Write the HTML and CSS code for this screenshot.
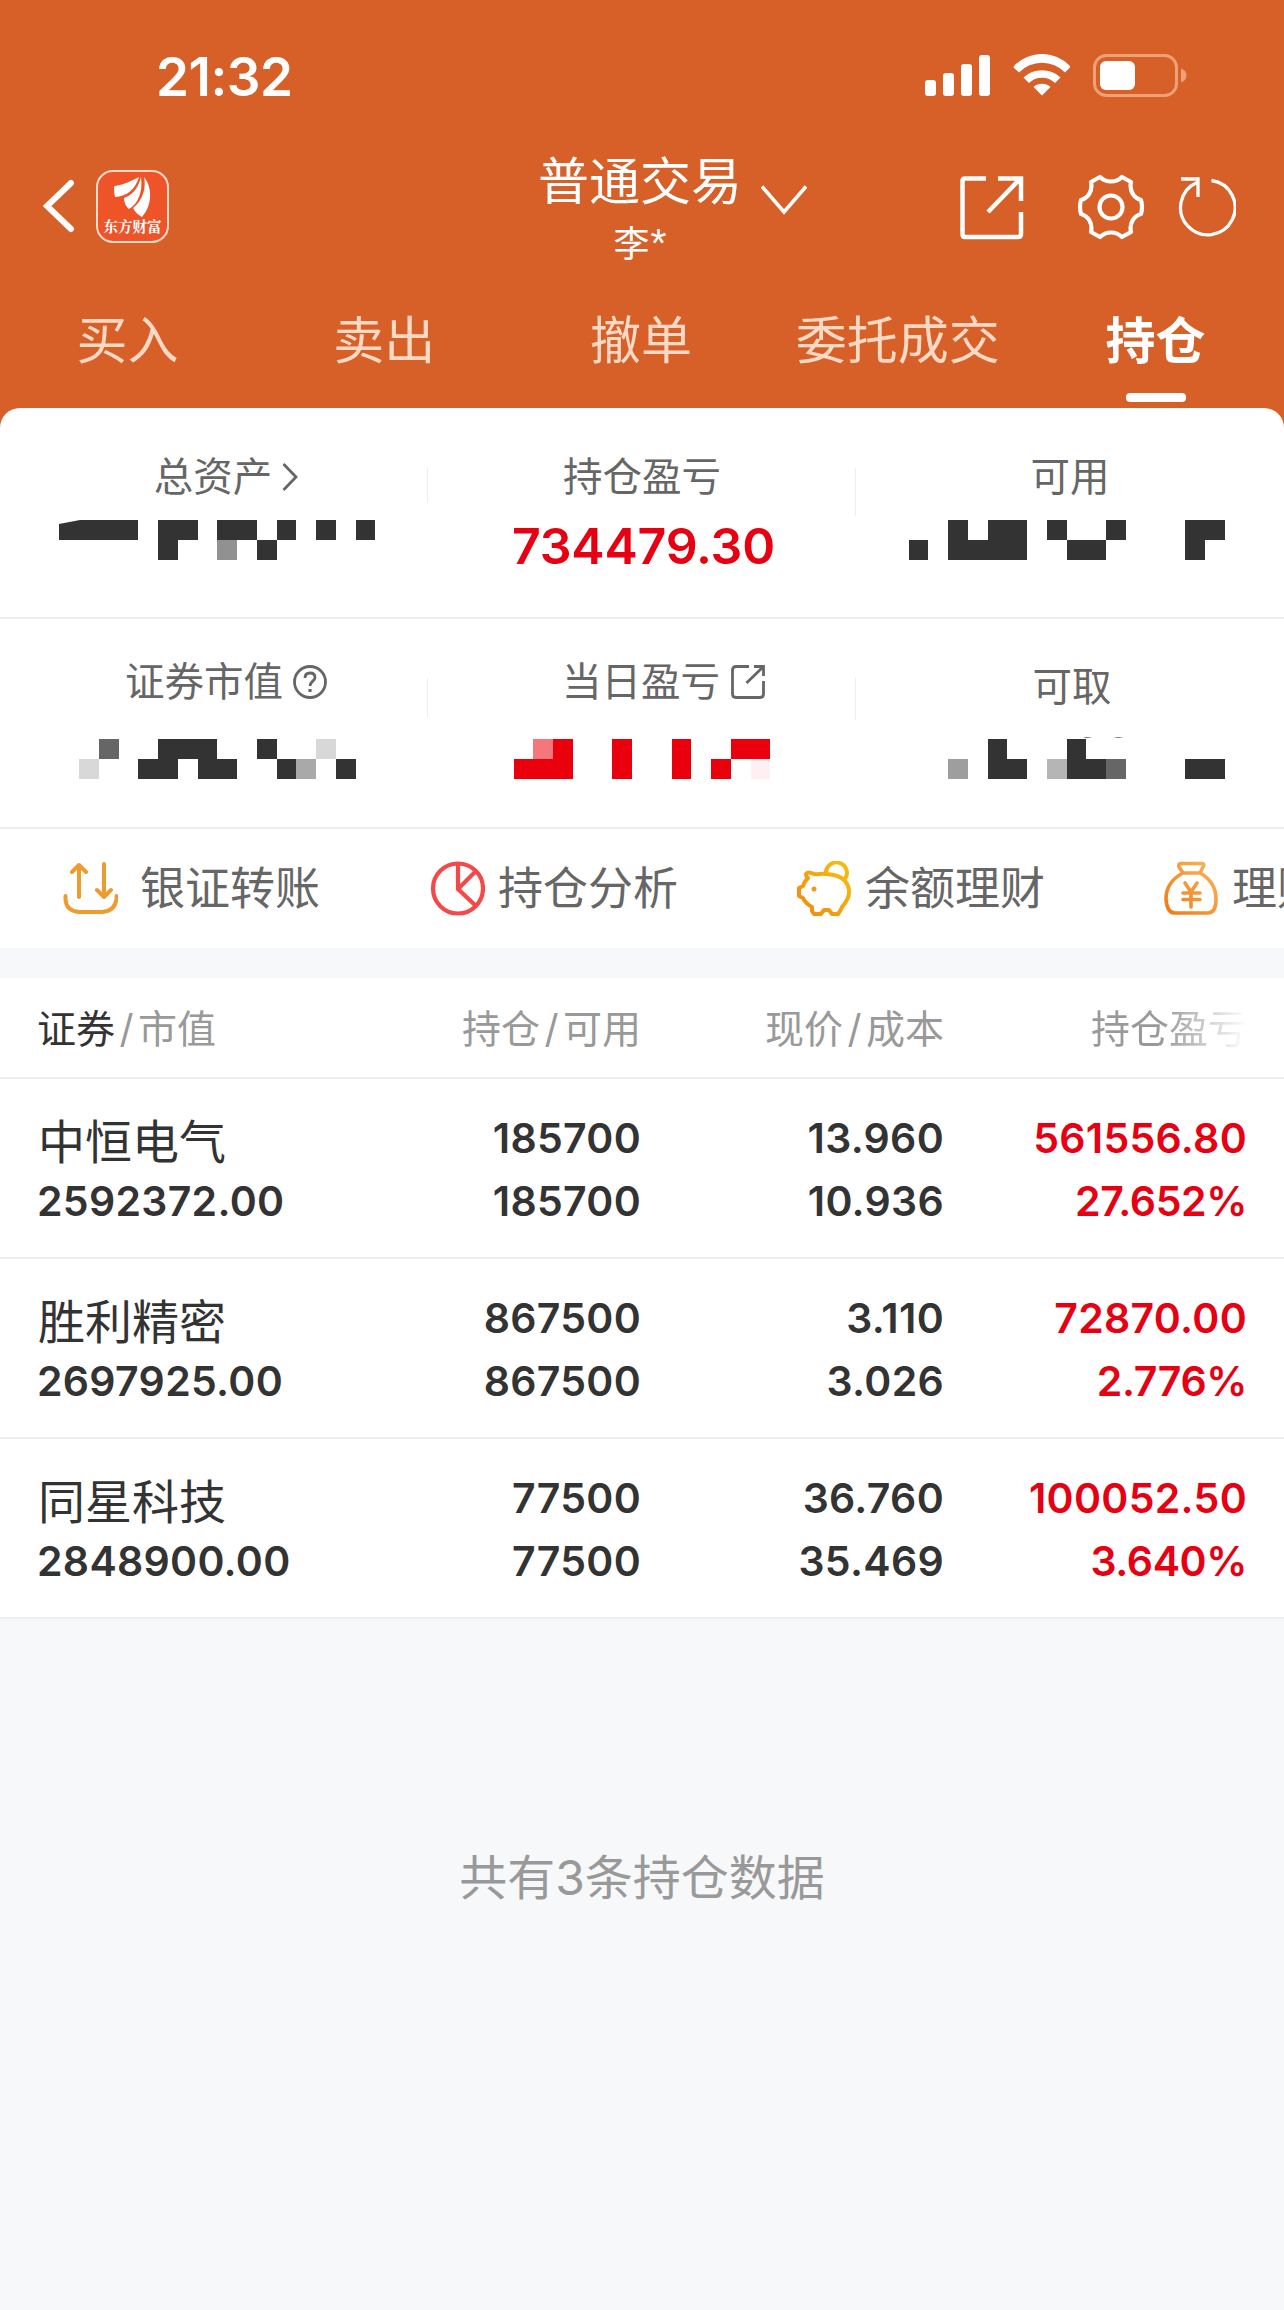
FILE: index.html
```html
<!DOCTYPE html>
<html lang="zh-CN">
<head>
<meta charset="utf-8">
<title>持仓</title>
<link rel="stylesheet" href="styles.css">
</head>
<body>
<header class="top">
  <div class="status">
    <span class="clock">21:32</span>
    <svg class="signal" width="66" height="42" viewBox="0 0 66 42" fill="#fff"><rect x="0" y="25" width="11" height="16" rx="3"/><rect x="18" y="18" width="11" height="23" rx="3"/><rect x="36" y="9" width="11" height="32" rx="3"/><rect x="54" y="0" width="11" height="41" rx="3"/></svg>
    <svg class="wifi" width="58" height="42" viewBox="0 0 58 42" fill="#fff"><path d="M0.5 13.5Q0.500 12.500 1.500 11.500A38.500 38.500 0 0 1 56.500 11.500Q57.500 12.500 57 13.500L52 18.500A32 32 0 0 0 6 18.500Z"/><path d="M10.500 23.500A27 27 0 0 1 47.500 23.500L42 29A19 19 0 0 0 16 29Z"/><path d="M20.500 33A13 13 0 0 1 37.500 33L29 41.500Z"/></svg>
    <svg class="battery" width="94" height="43" viewBox="0 0 94 43"><rect x="1.500" y="1.500" width="82" height="40" rx="12" fill="none" stroke="#eda177" stroke-width="3"/><rect x="7" y="7" width="35" height="29" rx="6" fill="#fff"/><path d="M88 14.500Q93.500 16.500 93.500 21.500T88 28.500Z" fill="#eda177"/></svg>
  </div>
  <div class="nav">
    <svg class="back" width="32" height="56" viewBox="0 0 32 56" fill="none" stroke="#fff" stroke-width="6" stroke-linecap="round"><path d="M28 5L4 28L28 51"/></svg>
    <div class="logo">
      <svg width="40" height="42" viewBox="0 0 40 42" fill="#fff"><path d="M26 1C18 5 10 9 2 10Q1 10 1 12Q1 17 2 21C14 20 22 14 26 1Z"/><path d="M28 1C25 13 19 19 11 22Q11 29 16 33C25 28 30 16 28 1Z"/><path d="M31 1C34 15 27 27 20 32Q23 38 29 41C39 30 40 12 31 1Z"/></svg>
      <span class="logo-text">东方财富</span>
    </div>
    <div class="account">
      <div class="account-name">普通交易</div>
      <div class="account-user">李<i>*</i></div>
    </div>
    <svg class="down" width="48" height="32" viewBox="0 0 48 32" fill="none" stroke="#fff" stroke-width="3.500"><path d="M2 1.500L24 27L46 1.500"/></svg>
    <svg class="share" width="66" height="66" viewBox="0 0 66 66" fill="none" stroke="#fff" stroke-width="4.500"><path d="M27 3.500H6Q3.500 3.500 3.500 6V59Q3.500 62 6 62H59Q62 62 62 59V37M39 3.500H62V26M61 4L29 37"/></svg>
    <svg class="gear" width="68" height="66" viewBox="0 0 68 66" fill="none" stroke="#fff" stroke-width="4.200" stroke-linejoin="round"><circle cx="34" cy="33" r="11.500"/><path d="M23 3L14 8C16 17 11 24 4 26Q2 33 4 40C11 42 16 49 14 58L23 63C29 57 39 57 45 63L54 58C52 49 57 42 64 40Q66 33 64 26C57 24 52 17 54 8L45 3C39 9 29 9 23 3Z"/></svg>
    <svg class="refresh" width="60" height="60" viewBox="0 0 60 60" fill="none" stroke="#fff" stroke-width="3.300"><path d="M35.500 3.500A27.300 27.300 0 1 1 21 5.500M5 2H22V20"/></svg>
  </div>
  <nav class="tabs">
    <span class="tab">买入</span><span class="tab">卖出</span><span class="tab">撤单</span><span class="tab">委托成交</span><span class="tab active">持仓</span>
  </nav>
</header>

<section class="panel">
  <div class="summary">
    <div class="cell sep-a">
      <div class="label total-assets"><span>总资产</span><svg class="chev" width="16" height="28" viewBox="0 0 16 28" fill="none" stroke="#666" stroke-width="2.800"><path d="M1.500 1L14 14L1.500 27"/></svg></div>
      <svg class="mosaic" viewBox="0 520 428 40" fill="#333"><path d="M59 524L80 520H138V540H59ZM158 520H198V540H178V560H158ZM217 520H257V540H217ZM277 520H296V540H277ZM316 520H336V540H316ZM356 520H375V540H356ZM257 540H277V560H257Z"/><path fill="#919191" d="M217 540H237V560H217Z"/></svg>
    </div>
    <div class="cell sep-b">
      <div class="label"><span>持仓盈亏</span></div>
      <div class="profit">734479.30</div>
    </div>
    <div class="cell">
      <div class="label"><span>可用</span></div>
      <svg class="mosaic" viewBox="856 520 428 40" fill="#333"><path d="M909 540H928V560H909ZM948 520H968V540H988V520H1027V560H948ZM1047 520H1067V540H1106V520H1126V540H1106V560H1067V540H1047ZM1185 520H1225V540H1205V560H1185Z"/></svg>
    </div>
  </div>
  <div class="summary second">
    <div class="cell sep-c">
      <div class="label market-value"><span>证券市值</span><svg class="help" width="34" height="34" viewBox="0 0 34 34" fill="none" stroke="#666" stroke-width="2.800"><circle cx="17" cy="17" r="15.500"/><path d="M12 13Q12 8 17 8T22 12.500C22 16 17 16.500 17 21"/><path d="M17 24V27" stroke-width="3.200"/></svg></div>
      <svg class="mosaic" viewBox="0 739 428 40" fill="#333"><path d="M158 739H217V759H237V779H198V759H178V779H138V759H158ZM257 739H277V759H257ZM277 759H296V779H277ZM336 759H356V779H336Z"/><path fill="#666" d="M99 739H119V759H99Z"/><path fill="#d8d8d8" d="M79 759H99V779H79ZM316 739H336V759H316Z"/><path fill="#a9a9a9" d="M296 759H316V779H296Z"/></svg>
    </div>
    <div class="cell sep-d">
      <div class="label day-profit"><span>当日盈亏</span><svg class="open" width="34" height="34" viewBox="0 0 34 34" fill="none" stroke="#666" stroke-width="2.800"><path d="M18 1.500H5Q1.500 1.500 1.500 5V29Q1.500 32.500 5 32.500H29Q32.500 32.500 32.500 29V16M23 1.500H32.500V11M32 2L15.500 18"/></svg></div>
      <svg class="mosaic" viewBox="428 739 428 40" fill="#ea000c"><path d="M553 739H573V779H514V759H553ZM612 739H632V779H612ZM672 739H691V779H672ZM731 739H770V759H731ZM711 759H731V779H711Z"/><path fill="#f5777c" d="M533 739H553V759H533Z"/><path fill="#fef0f2" d="M751 759H770V779H751Z"/></svg>
    </div>
    <div class="cell">
      <div class="label withdrawable"><span>可取</span></div>
      <svg class="mosaic" viewBox="856 739 428 40" fill="#333"><path d="M988 739H1007V759H1027V779H988ZM1067 739H1086V759H1106V779H1067ZM1185 759H1225V779H1185Z"/><path d="M1083 737Q1087 739 1092 737M1114 737Q1118 739 1123 737" fill="#777"/><path fill="#9e9e9e" d="M948 759H968V779H948Z"/><path fill="#b5b5b5" d="M1047 759H1067V779H1047Z"/><path fill="#666" d="M1106 759H1126V779H1106Z"/></svg>
    </div>
  </div>
  <div class="shortcuts">
    <div class="shortcut first"><svg width="56" height="56" viewBox="0 0 56 56" fill="none" stroke="#ee9b2f" stroke-width="4" stroke-linecap="round" stroke-linejoin="round"><path d="M3.500 35V38Q4 50 17 51H40Q53 50 54.500 38V35M17 36V4M10 11L17 4L24 11M42 3V36M35 29L42 36L49 29"/></svg><span>银证转账</span></div>
    <div class="shortcut"><svg width="56" height="56" viewBox="0 0 56 56" fill="none" stroke="#f5484a" stroke-width="4.200"><circle cx="29" cy="27.500" r="25"/><path d="M29 2.500V28L47 45M29 28L47 10"/></svg><span>持仓分析</span></div>
    <div class="shortcut"><svg width="56" height="56" viewBox="0 0 56 56" fill="none" stroke="url(#gold)" stroke-width="4" stroke-linejoin="round"><defs><linearGradient id="gold" x1="0" y1="1" x2="1" y2="0"><stop offset="0" stop-color="#f08a10"/><stop offset="1" stop-color="#f8bf10"/></linearGradient></defs><path d="M30 13A10.500 10.500 0 1 1 49 18M30 13C24 12 22 14 18 13Q12 10 10 13Q10 16 12 17Q8 21 7 25L3 27V35L7 37Q9 42 16 46V50L18 53H25L28 49H33L36 53H42Q44 51 46 46Q54 37 53 29Q51 14 30 13Z"/><circle cx="18" cy="28" r="2.500" fill="#f39a10" stroke="none"/></svg><span>余额理财</span></div>
    <div class="shortcut"><svg width="56" height="56" viewBox="0 0 56 56" fill="none" stroke="url(#amber)" stroke-width="3.600" stroke-linecap="round" stroke-linejoin="round"><defs><linearGradient id="amber" x1="0" y1="1" x2="1" y2="0"><stop offset="0" stop-color="#f07a18"/><stop offset="1" stop-color="#fbb55a"/></linearGradient></defs><path d="M18 2.500H39Q42 2.500 40 6L37 12H20L16 6Q15 2.500 18 2.500ZM20 12Q3 21 3 38Q4 52 12 52H45Q53 52 53 38Q53 21 37 12M22 22L28 31L34 22M28 31V46M20 32H37M20 38.500H37"/></svg><span>理财</span></div>
  </div>
</section>

<section class="holdings">
  <div class="row head"><div class="c1"><b>证券</b><i>/</i>市值</div><div>持仓<i>/</i>可用</div><div>现价<i>/</i>成本</div><div class="fade">持仓盈亏</div></div>
  <div class="row"><div class="c1"><span class="name">中恒电气</span><span>2592372.00</span></div><div><span>185700</span><span>185700</span></div><div><span>13.960</span><span>10.936</span></div><div class="up"><span>561556.80</span><span class="rate">27.652%</span></div></div>
  <div class="row"><div class="c1"><span class="name">胜利精密</span><span>2697925.00</span></div><div><span>867500</span><span>867500</span></div><div><span>3.110</span><span>3.026</span></div><div class="up"><span>72870.00</span><span class="rate">2.776%</span></div></div>
  <div class="row"><div class="c1"><span class="name">同星科技</span><span>2848900.00</span></div><div><span>77500</span><span>77500</span></div><div><span>36.760</span><span>35.469</span></div><div class="up"><span>100052.50</span><span class="rate">3.640%</span></div></div>
</section>
<footer class="total">共有3条持仓数据</footer>
</body>
</html>
```
FILE: styles.css
```css
* { box-sizing: border-box; }
body {
  margin: 0;
  width: 1284px;
  height: 2310px;
  overflow: hidden;
  background: #f7f8fa;
  color: #333;
  font-family: Inter, "Noto Sans CJK SC", sans-serif;
}
svg { display: block; flex: none; }

/* Header */
.top { height: 428px; background: #d75f28; color: #fff; }
.status { display: flex; align-items: flex-start; height: 150px; padding: 54px 0 0 156px; }
.clock { width: 769px; padding-top: 1px; font-size: 53px; line-height: 44px; font-weight: 600; letter-spacing: -0.5px; }
.signal { margin-top: 1px; }
.wifi { margin: 0 0 0 22px; }
.battery { margin-left: 22px; }
.nav { display: flex; align-items: flex-start; height: 130px; padding-left: 43px; }
.back { margin-top: 28px; }
.logo {
  display: flex; flex-direction: column; align-items: center;
  width: 73px; height: 73px; margin: 20px 0 0 21px; padding-top: 4px;
  border: 2px solid #f9dccb; border-radius: 17px; background: #ee5427;
}
.logo-text { font-family: "Noto Serif CJK SC", "Noto Sans CJK SC", serif; font-size: 14.500px; line-height: 16px; font-weight: 700; white-space: nowrap; }
.account { width: 206px; margin-left: 368px; padding-top: 1px; text-align: center; white-space: nowrap; }
.account-name { font-size: 51px; line-height: 62px; }
.account-user { font-size: 36px; line-height: 62px; }
.account-user i { margin-left: 1px; font-family: "Liberation Sans", sans-serif; font-size: 41px; line-height: 40px; font-style: normal; }
.down { margin: 35px 0 0 17px; }
.share { margin: 25px 0 0 151px; }
.gear { margin: 24px 0 0 52px; }
.refresh { margin: 27px 0 0 31px; }
.tabs { display: grid; grid-template-columns: repeat(5, 1fr); text-align: center; }
.tab { font-size: 51px; line-height: 122px; height: 122px; margin-left: -2px; color: #fbd9c5; }
.active { display: flex; flex-direction: column; align-items: center; margin-left: 0; color: #fff; font-weight: 700; font-size: 50px; }
.active::after { content: ""; flex: none; width: 60px; height: 9px; margin-top: -9px; border-radius: 4px; background: #fff; }

/* Account summary */
.panel { height: 540px; margin-top: -20px; border-radius: 20px 20px 0 0; background: #fff; overflow: hidden; }
.summary { display: grid; grid-template-columns: repeat(3, 428px); height: 211px; border-bottom: 2px solid #eee; }
.second { height: 210px; }
.cell { padding-top: 46px; background: linear-gradient(#eee, #eee) no-repeat 100% 60px / 0 0; }
.sep-a { background-size: 1px 35px; }
.sep-b { background-size: 1px 48px; }
.second .cell { padding-top: 40px; background-position: 100% 59px; }
.second .sep-c { background-size: 1px 39px; }
.second .sep-d { background-size: 1px 42px; }
.label { display: flex; justify-content: center; align-items: center; height: 46px; color: #666; font-size: 39.500px; line-height: 46px; }
.total-assets, .market-value { padding-left: 24px; }
.day-profit { padding-left: 43px; }
.withdrawable { padding: 10px 0 0 4px; }
.chev { margin: 0 0 0 10px; }
.help { margin-left: 10px; }
.open { margin-left: 11px; }
.mosaic { width: 428px; height: 40px; margin-top: 20px; overflow: visible; }
.second .mosaic { margin-top: 34px; }
.profit { margin-top: 16px; padding-left: 3px; text-align: center; color: #e60012; font-size: 50px; line-height: 60px; font-weight: 600; letter-spacing: -0.2px; }
.shortcuts { display: flex; height: 119px; padding-left: 62px; align-items: center; overflow: hidden; }
.shortcut { display: flex; flex: none; align-items: center; width: 367px; gap: 13px; color: #666; font-size: 45px; line-height: 60px; }
.first { gap: 22px; }

/* Holdings */
.holdings { margin-top: 30px; background: #fff; }
.row {
  display: grid; grid-template-columns: 340px 264px 303px 303px;
  height: 180px; padding: 28px 37px 0; border-bottom: 2px solid #eee;
  text-align: right; font-size: 41px; font-weight: 600; white-space: nowrap;
  letter-spacing: 0.300px;
}
.row span { display: block; line-height: 63px; }
.row .c1 { text-align: left; }
.row .name { height: 63px; padding-left: 1px; font-size: 47px; line-height: 69px; font-weight: 400; letter-spacing: 0; }
.row .rate { letter-spacing: -0.400px; }
.row.head { height: 101px; padding-top: 20px; color: #999; font-size: 39px; line-height: 62px; font-weight: 400; letter-spacing: 0; }
.head b { color: #333; font-weight: 400; }
.head i { margin: 0 4.500px; font-style: normal; }
.fade { background: linear-gradient(90deg, #999 72%, #fff); -webkit-background-clip: text; background-clip: text; color: transparent; }
.up { color: #e60012; }
.total { padding-top: 226px; text-align: center; color: #999; font-size: 48px; line-height: 66px; }
```
